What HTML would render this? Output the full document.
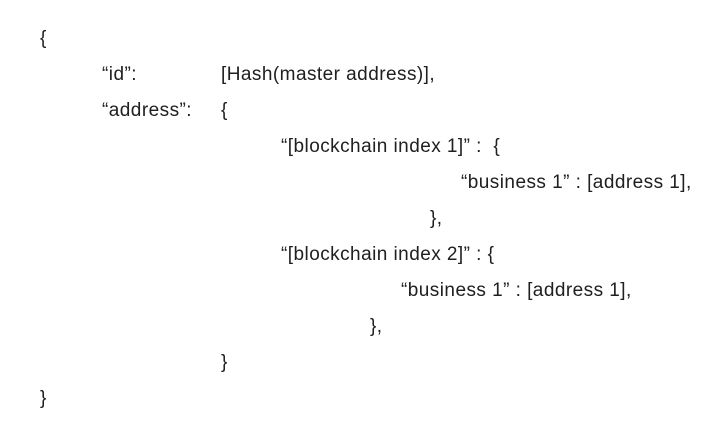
<!DOCTYPE html>
<html><head><meta charset="utf-8"><style>
body{margin:0;width:722px;height:448px;background:#fff;position:relative;overflow:hidden;font-family:"Liberation Sans",sans-serif;font-size:19px;color:#202020;letter-spacing:0.45px}
div{position:absolute;line-height:36px;white-space:nowrap}
</style></head><body>
<div style="left:40px;top:21px">{</div>
<div style="left:102px;top:57px">“id”:</div>
<div style="left:221px;top:57px">[Hash(master address)],</div>
<div style="left:102px;top:93px">“address”:</div>
<div style="left:221px;top:93px">{</div>
<div style="left:281px;top:129px">“[blockchain index 1]” :&nbsp; {</div>
<div style="left:461px;top:165px">“business 1” : [address 1],</div>
<div style="left:430px;top:201px">},</div>
<div style="left:281px;top:237px">“[blockchain index 2]” : {</div>
<div style="left:401px;top:273px">“business 1” : [address 1],</div>
<div style="left:370px;top:309px">},</div>
<div style="left:221px;top:345px">}</div>
<div style="left:40px;top:381px">}</div>
</body></html>
